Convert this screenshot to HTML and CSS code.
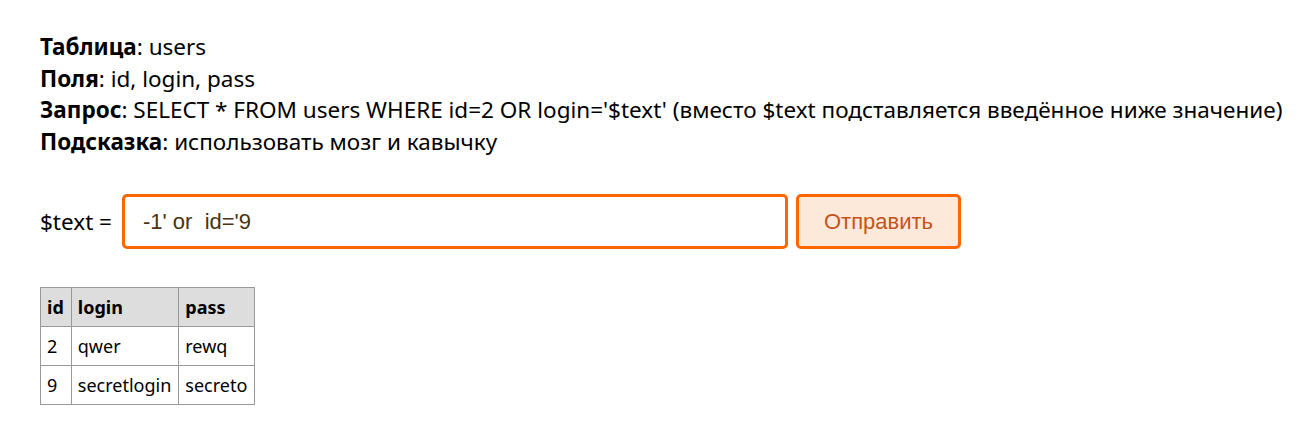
FILE: index.html
```html
<!DOCTYPE html>
<html lang="ru">
<head>
<meta charset="utf-8">
<link rel="stylesheet" href="styles.css">
</head>
<body>
<div class="info">
  <div><b>Таблица</b>: users</div>
  <div><b>Поля</b>: id, login, pass</div>
  <div><b>Запрос</b>: SELECT * FROM users WHERE id=2 OR login='$text' (вместо $text подставляется введённое ниже значение)</div>
  <div><b>Подсказка</b>: использовать мозг и кавычку</div>
</div>
<form class="form">
  <label class="label">$text =</label>
  <input class="field" type="text" value="-1' or  id='9">
  <button class="btn" type="button">Отправить</button>
</form>
<table class="tbl">
  <tr><th>id</th><th>login</th><th>pass</th></tr>
  <tr><td>2</td><td>qwer</td><td>rewq</td></tr>
  <tr><td>9</td><td>secretlogin</td><td>secreto</td></tr>
</table>
</body>
</html>
```
FILE: styles.css
```css
body {
  margin: 0;
  padding: 31px 0 31px 40px;
  font-family: "Noto Sans", "DejaVu Sans", sans-serif;
  font-size: 22.5px;
  color: #000;
  background: #fff;
}
.info {
  line-height: 31.5px;
  white-space: nowrap;
}
.info b {
  font-weight: 700;
}
.form {
  display: flex;
  align-items: center;
  margin-top: 37px;
}
.label {
  margin-right: 10px;
}
.field {
  box-sizing: border-box;
  width: 666px;
  height: 55px;
  border: 3px solid #f60;
  border-radius: 5px;
  padding: 0 18px;
  font-family: "Liberation Sans", Arial, sans-serif;
  font-size: 22px;
  color: #4a3212;
  outline: none;
}
.btn {
  box-sizing: border-box;
  margin-left: 8px;
  width: 165px;
  height: 55px;
  border: 3px solid #f60;
  border-radius: 5px;
  background: #fde9da;
  color: #c4541a;
  font-family: "Liberation Sans", Arial, sans-serif;
  font-size: 22px;
}
.tbl {
  margin-top: 38px;
  border-collapse: collapse;
  font-size: 18px;
}
.tbl th, .tbl td {
  border: 1px solid #999;
  text-align: left;
  padding: 0 7px 0 6px;
  height: 38px;
}
.tbl th {
  background: #ddd;
  font-weight: 700;
}
```
